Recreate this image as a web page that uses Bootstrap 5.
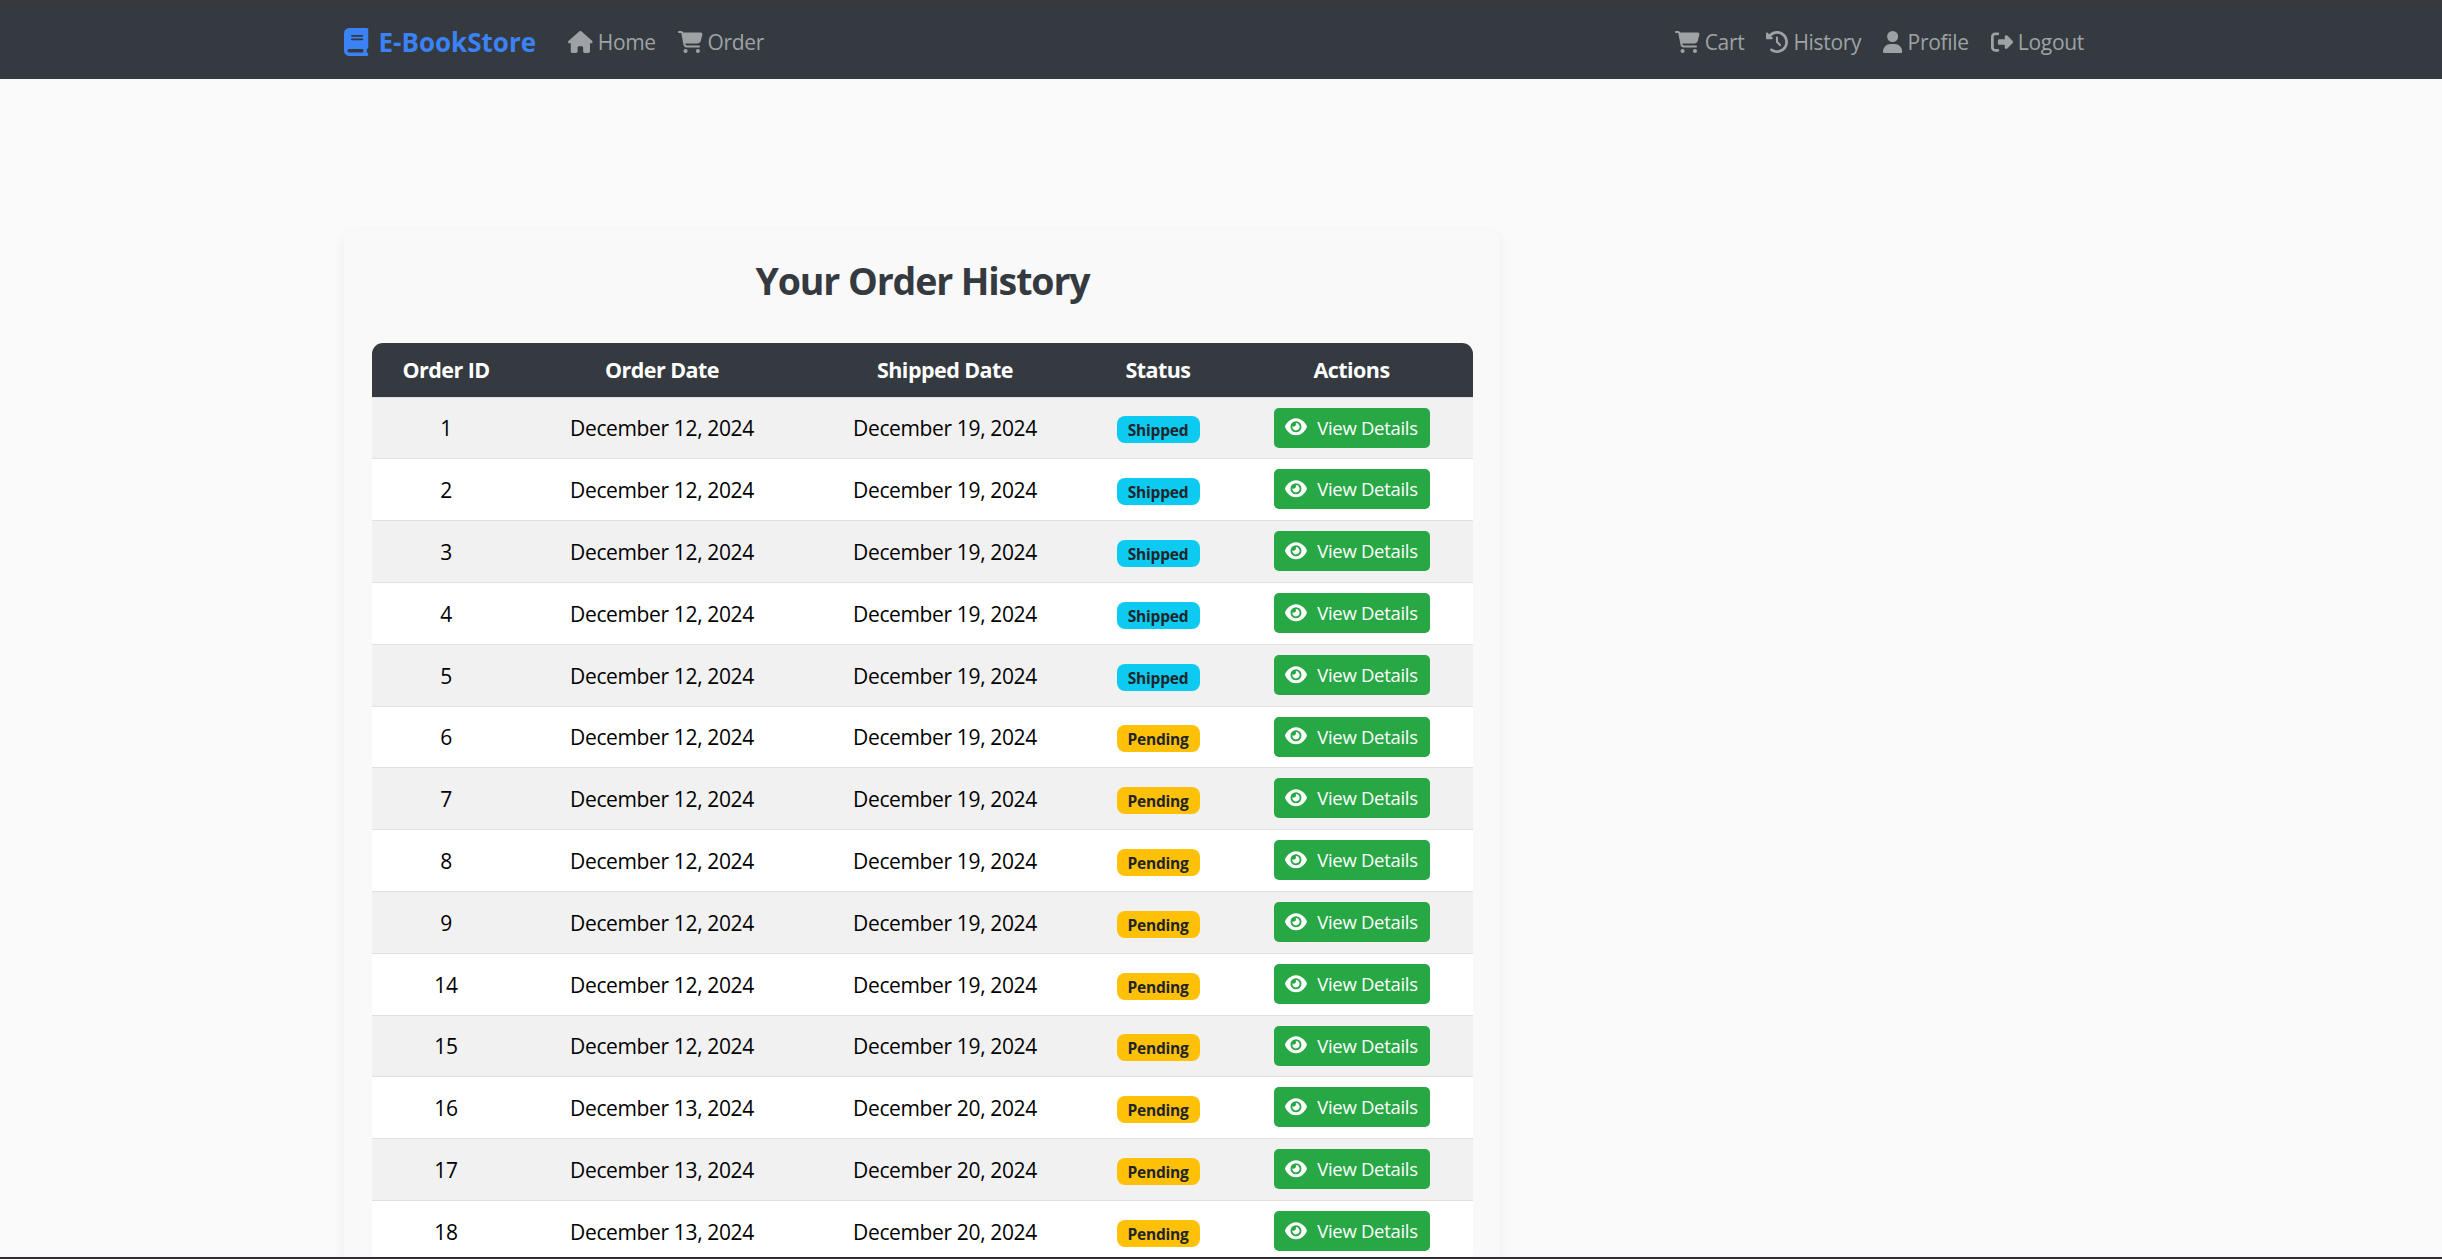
<!DOCTYPE html>
<html lang="en">
<head>
<meta charset="utf-8">
<meta name="viewport" content="width=device-width, initial-scale=1">
<title>E-BookStore - Order History</title>
<link href="https://cdn.jsdelivr.net/npm/bootstrap@5.3.0/dist/css/bootstrap.min.css" rel="stylesheet">
<style>
  body { background: #fafafa; font-family: "Open Sans", "Noto Sans", sans-serif; font-size: 21px; letter-spacing: -.36px; height: 100vh; }
  .site-nav { background: #343a40; border-top: 3px solid #393939; height: 79px; padding: 2px 0 0; }
  .page-wrap { width: 1741px; margin-left: 344px; }
  .site-nav .navbar-brand { color: #3b82f6; font-size: 26px; font-weight: 700; letter-spacing: 0; gap: 10px; margin-right: 21px; padding: 0; line-height: 1; }
  .site-nav .nav-link { color: #9fa2a5; padding: 0 11px; gap: 5px; line-height: 33px; }
  .site-nav .side-end { margin-right: -10px; letter-spacing: -.3px; }
  .ico { display: block; fill: currentColor; height: 22px; flex: none; }
  .ico-brand { height: 28px; }
  .history-card { width: 1156px; margin-top: 151px; padding: 28px 27px 28px 28px; background: #f9f9f9; border-radius: 11px; box-shadow: 0 5px 14px rgba(0,0,0,.06); }
  .history-title { color: #343a40; font-size: 37.5px; font-weight: 700; line-height: 46px; letter-spacing: -1.12px; margin: 0 0 39px; }
  .order-table { table-layout: fixed; width: 1101px; margin: 0; border-radius: 11px; overflow: hidden; --bs-table-bg: #fff; --bs-table-striped-bg: #f1f1f1; --bs-table-color: #000; --bs-table-striped-color: #000; }
  .order-table > thead th { background: #343a40; color: #fff; height: 54px; padding: 0; border: 0; font-size: 21.5px; letter-spacing: -.55px; line-height: 33px; vertical-align: middle; }
  .order-table > tbody td { height: 62px; padding: 0; border-width: 1px 0 0; border-color: #dee2e6; line-height: 33px; }
  .order-table > tbody tr:nth-child(5n+1) td { height: 61px; }
  .order-table > tbody td:nth-child(-n+3) { padding-top: 2px; }
  .order-table .badge { width: 83px; height: 27px; padding: 0; color: #212529 !important; font-size: 15.5px; line-height: 28px; border-radius: 8px; position: relative; top: .5px; vertical-align: middle; letter-spacing: -.2px; }
  .btn-view { --bs-btn-color: #fff; --bs-btn-bg: #28a745; --bs-btn-hover-color: #fff; --bs-btn-hover-bg: #218838; width: 156px; height: 40px; padding: 0; border: 0; border-radius: 5px; font-size: 18.5px; gap: 10px; letter-spacing: -.3px; vertical-align: middle; }
  .btn-view .ico { height: 19.5px; margin-bottom: 1px; }
  .bottom-edge { height: 2px; background: #302c2f; }
</style>
<script src="https://cdn.jsdelivr.net/npm/bootstrap@5.3.0/dist/js/bootstrap.bundle.min.js"></script>
</head>
<body class="d-flex flex-column overflow-hidden">
<svg class="d-none">
  <symbol id="i-book" viewBox="0 0 448 512"><path d="M96 0C43 0 0 43 0 96V416c0 53 43 96 96 96H384h32c17.700 0 32-14.300 32-32s-14.300-32-32-32V384c17.700 0 32-14.300 32-32V32c0-17.700-14.300-32-32-32H384 96zm0 384H352v64H96c-17.700 0-32-14.300-32-32s14.300-32 32-32zm32-240c0-8.800 7.200-16 16-16H336c8.800 0 16 7.200 16 16s-7.200 16-16 16H144c-8.800 0-16-7.200-16-16zm16 48H336c8.800 0 16 7.200 16 16s-7.200 16-16 16H144c-8.800 0-16-7.200-16-16s7.200-16 16-16z"/></symbol>
  <symbol id="i-home" viewBox="0 0 576 512"><path d="M575.800 255.500c0 18-15 32.100-32 32.100h-32l.7 160.200c0 2.700-.2 5.400-.5 8.100V472c0 22.100-17.900 40-40 40H456c-1.100 0-2.200 0-3.300-.1c-1.400 .1-2.800 .1-4.200 .1H416 392c-22.100 0-40-17.900-40-40V448 384c0-17.700-14.300-32-32-32H256c-17.700 0-32 14.300-32 32v64 24c0 22.100-17.900 40-40 40H160 128.100c-1.500 0-3-.1-4.500-.2c-1.200 .1-2.400 .2-3.600 .2H104c-22.100 0-40-17.900-40-40V360c0-.9 0-1.900 .1-2.800V287.600H32c-18 0-32-14-32-32.100c0-9 3-17 10-24L266.400 8c7-7 15-8 22-8s15 2 21 7L564.800 231.500c8 7 12 15 11 24z"/></symbol>
  <symbol id="i-cart" viewBox="0 0 576 512"><path d="M0 24C0 10.700 10.700 0 24 0H69.500c22 0 41.500 12.800 50.600 32h411c26.300 0 45.500 25 38.600 50.400l-41 152.300c-8.500 31.400-37 53.300-69.500 53.300H170.700l5.400 28.500c2.200 11.300 12.100 19.500 23.600 19.500H488c13.300 0 24 10.700 24 24s-10.700 24-24 24H199.700c-34.600 0-64.300-24.600-70.700-58.500L77.400 54.500c-.7-3.800-4-6.500-7.900-6.500H24C10.700 48 0 37.300 0 24zM128 464a48 48 0 1 1 96 0 48 48 0 1 1 -96 0zm336-48a48 48 0 1 1 0 96 48 48 0 1 1 0-96z"/></symbol>
  <symbol id="i-history" viewBox="0 0 512 512"><path d="M75 75L41 41C25.900 25.900 0 36.600 0 57.900V168c0 13.300 10.700 24 24 24H134.100c21.400 0 32.100-25.900 17-41l-30.800-30.800C155 85.500 203 64 256 64c106 0 192 86 192 192s-86 192-192 192c-40.800 0-78.600-12.700-109.700-34.400c-14.500-10.100-34.400-6.600-44.600 7.900s-6.600 34.400 7.900 44.600C151.200 495 201.700 512 256 512c141.400 0 256-114.600 256-256S397.400 0 256 0C185.300 0 121.300 28.700 75 75zm181 53c-13.300 0-24 10.700-24 24V256c0 6.400 2.500 12.500 7 17l72 72c9.400 9.400 24.600 9.400 33.900 0s9.400-24.600 0-33.900l-65-65V152c0-13.300-10.700-24-24-24z"/></symbol>
  <symbol id="i-user" viewBox="0 0 448 512"><path d="M224 256A128 128 0 1 0 224 0a128 128 0 1 0 0 256zm-45.700 48C79.800 304 0 383.800 0 482.300C0 498.700 13.300 512 29.700 512H418.300c16.400 0 29.700-13.300 29.700-29.700C448 383.800 368.200 304 269.700 304H178.300z"/></symbol>
  <symbol id="i-logout" viewBox="0 0 512 512"><path d="M377.900 105.900L500.700 228.700c7.200 7.200 11.300 17.100 11.300 27.300s-4.100 20.100-11.300 27.300L377.900 406.100c-6.400 6.400-15 9.900-24 9.900c-18.700 0-33.900-15.200-33.900-33.900V320H192c-17.700 0-32-14.300-32-32V224c0-17.700 14.300-32 32-32H320V129.900c0-18.700 15.200-33.900 33.900-33.900c9 0 17.600 3.600 24 9.900zM160 96H96c-17.700 0-32 14.300-32 32V384c0 17.700 14.300 32 32 32h64c17.700 0 32 14.300 32 32s-14.300 32-32 32H96c-53 0-96-43-96-96V128C0 75 43 32 96 32h64c17.700 0 32 14.300 32 32s-14.300 32-32 32z"/></symbol>
  <symbol id="i-eye" viewBox="0 0 576 512"><path d="M288 32c-80.800 0-145.500 36.800-192.600 80.600C48.600 156 17.300 208 2.500 243.700c-3.300 7.900-3.300 16.700 0 24.600C17.300 304 48.600 356 95.400 399.400C142.500 443.200 207.200 480 288 480s145.500-36.800 192.600-80.600c46.800-43.500 78.100-95.400 93-131.100c3.300-7.900 3.300-16.700 0-24.600c-14.900-35.700-46.200-87.700-93-131.100C433.500 68.800 368.800 32 288 32zM144 256a144 144 0 1 1 288 0 144 144 0 1 1 -288 0zm144-64c0 35.300-28.700 64-64 64c-7.100 0-13.900-1.200-20.300-3.300c-5.500-1.800-11.900 1.600-11.700 7.400c.3 6.900 1.300 13.800 3.200 20.700c13.700 51.200 66.400 81.600 117.600 67.900s81.600-66.400 67.900-117.600c-11.100-41.500-47.800-69.400-88.600-71.100c-5.800-.2-9.200 6.100-7.400 11.700c2.100 6.400 3.300 13.200 3.300 20.300z"/></symbol>
</svg>

<nav class="navbar site-nav flex-shrink-0">
  <div class="page-wrap d-flex align-items-center">
    <a class="navbar-brand d-flex align-items-center" href="#"><svg class="ico ico-brand" viewBox="0 0 448 512"><use href="#i-book"/></svg><span>E-BookStore</span></a>
    <div class="d-flex">
      <a class="nav-link d-flex align-items-center" href="#"><svg class="ico" viewBox="0 0 576 512"><use href="#i-home"/></svg>Home</a>
      <a class="nav-link d-flex align-items-center" href="#"><svg class="ico" viewBox="0 0 576 512"><use href="#i-cart"/></svg>Order</a>
    </div>
    <div class="d-flex ms-auto side-end">
      <a class="nav-link d-flex align-items-center" href="#"><svg class="ico" viewBox="0 0 576 512"><use href="#i-cart"/></svg>Cart</a>
      <a class="nav-link d-flex align-items-center" href="#"><svg class="ico" viewBox="0 0 512 512"><use href="#i-history"/></svg>History</a>
      <a class="nav-link d-flex align-items-center" href="#"><svg class="ico" viewBox="0 0 448 512"><use href="#i-user"/></svg>Profile</a>
      <a class="nav-link d-flex align-items-center" href="#"><svg class="ico" viewBox="0 0 512 512"><use href="#i-logout"/></svg>Logout</a>
    </div>
  </div>
</nav>

<main class="flex-grow-1 overflow-hidden" style="min-height:0">
  <div class="page-wrap">
    <section class="history-card">
      <h2 class="history-title text-center">Your Order History</h2>
      <table class="table table-striped order-table text-center align-middle">
        <colgroup><col style="width:148px"><col style="width:284px"><col style="width:282px"><col style="width:144px"><col style="width:243px"></colgroup>
        <thead><tr><th>Order ID</th><th>Order Date</th><th>Shipped Date</th><th>Status</th><th>Actions</th></tr></thead>
        <tbody id="orders"></tbody>
      </table>
    </section>
  </div>
</main>
<div class="bottom-edge flex-shrink-0"></div>

<script>
  const ids = [1, 2, 3, 4, 5, 6, 7, 8, 9, 14, 15, 16, 17, 18];
  document.getElementById('orders').innerHTML = ids.map(id => {
    const late = id >= 16;
    const status = id <= 5 ? '<span class="badge text-bg-info">Shipped</span>' : '<span class="badge text-bg-warning">Pending</span>';
    return `<tr><td>${id}</td><td>December ${late ? 13 : 12}, 2024</td><td>December ${late ? 20 : 19}, 2024</td><td>${status}</td>
      <td><a href="#" class="btn btn-view d-inline-flex align-items-center justify-content-center"><svg class="ico" viewBox="0 0 576 512"><use href="#i-eye"/></svg>View Details</a></td></tr>`;
  }).join('');
</script>
</body>
</html>
